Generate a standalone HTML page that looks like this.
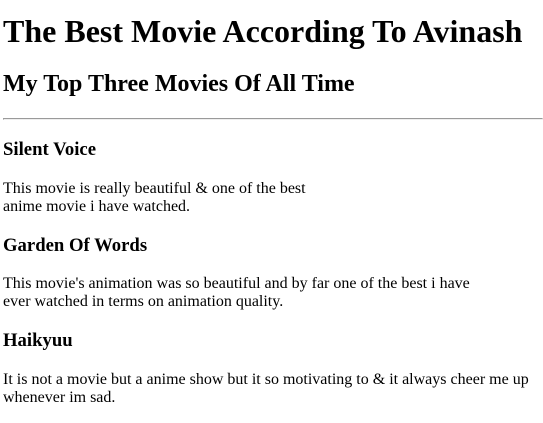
<!DOCTYPE html>
<html><head><meta charset="utf-8"><style>
body{font-family:"Liberation Serif",serif;margin:0 0 0 3px;color:#000;background:#fff}
h1{margin-top:13px}
</style></head><body>
<h1>The Best Movie According To Avinash</h1>
<h2>My Top Three Movies Of All Time</h2>
<hr>
<h3>Silent Voice</h3>
<p>This movie is really beautiful &amp; one of the best<br>anime movie i have watched.</p>
<h3>Garden Of Words</h3>
<p>This movie's animation was so beautiful and by far one of the best i have<br>ever watched in terms on animation quality.</p>
<h3>Haikyuu</h3>
<p>It is not a movie but a anime show but it so motivating to &amp; it always cheer me up<br>whenever im sad.</p>
</body></html>
